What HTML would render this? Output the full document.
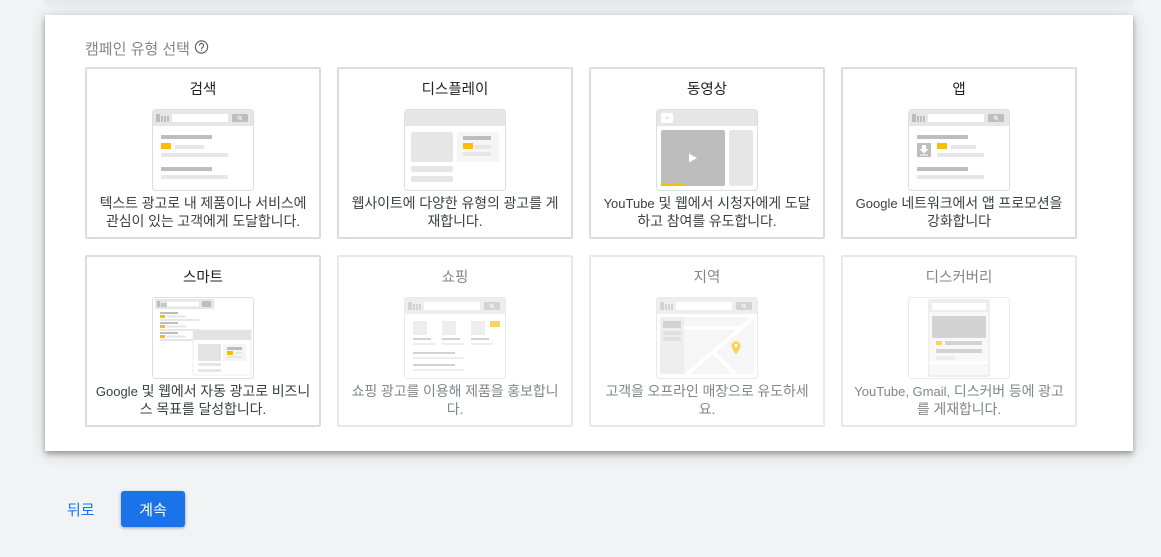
<!DOCTYPE html>
<html lang="ko">
<head>
<meta charset="utf-8">
<title>캠페인 유형 선택</title>
<style>
*{box-sizing:border-box}
html,body{margin:0;padding:0}
body{width:1161px;height:557px;overflow:hidden;position:relative;background:#f1f3f4;font-family:"Liberation Sans","Noto Sans CJK KR","NanumGothic",sans-serif;font-size:14px;color:#3c4043}
.top{position:absolute;left:45px;top:-27px;width:1088px;height:30px;background:#e8e9eb;box-shadow:0 1px 6px rgba(0,0,0,.06)}
.panel{position:absolute;left:45px;top:15px;width:1088px;height:436px;background:#fff;box-shadow:0 3px 5px rgba(0,0,0,.3),0 2px 16px rgba(0,0,0,.16)}
.label{position:absolute;left:85px;top:41px;font-size:15px;line-height:18px;color:#80868b;white-space:nowrap}
.help{position:absolute;left:194px;top:40px}
.card{position:absolute;width:236px;height:172px;background:#fff;border:2px solid #dadce0;border-radius:2px}
.card .t{position:absolute;left:0;right:0;top:12px;font-size:14.500px;line-height:18px;text-align:center;color:#202124;white-space:nowrap}
.card .d{position:absolute;left:0;right:0;top:125px;line-height:18px;letter-spacing:-.1px;text-align:center;color:#3c4043;white-space:nowrap}
.card .d i{font-style:normal;font-size:13px;letter-spacing:0;line-height:0}
.card svg{position:absolute;left:65px;top:40px}
.soft svg{filter:blur(.3px)}
.off{border-color:#e8e8ea}
.off .t,.off .d{color:#80868b}
.off svg{opacity:.65;filter:blur(.3px)}
.back{position:absolute;left:67px;top:502px;font-size:15px;line-height:18px;color:#1a73e8}
.go{position:absolute;left:121px;top:491px;width:64px;height:36px;border-radius:3px;background:#1a73e8;color:#fff;font-size:15px;text-align:center;line-height:39px;box-shadow:0 1px 3px rgba(60,64,67,.45)}
</style>
</head>
<body>
<div class="top"></div>
<div class="panel"></div>
<div class="label">캠페인 유형 선택</div>
<svg class="help" width="15" height="15" viewBox="0 0 15 15" fill="none"><circle cx="7.500" cy="7" r="6.100" stroke="#5f6368" stroke-width="1.200"/><path d="M5.400 5.500a2.100 2.100 0 1 1 3.300 1.700c-.7.500-1.200.9-1.200 1.800" stroke="#5f6368" stroke-width="1.200"/><rect x="6.900" y="9.800" width="1.200" height="1.200" fill="#5f6368"/></svg>

<div class="card" style="left:85px;top:67px">
<div class="t">검색</div>
<svg width="102" height="82" viewBox="0 0 102 82"><rect x=".5" y=".5" width="101" height="81" rx="3" fill="#fff" stroke="#dedede"/><path d="M1 3a2 2 0 0 1 2-2h96a2 2 0 0 1 2 2v14H1z" fill="#e6e6e6"/><path d="M4 5h4v8H4zM9 7h2v6H9zM12 7h2v6h-2zM15 7h2v6h-2z" fill="#bdbdbd"/><rect x="20" y="5" width="56" height="8" fill="#fff"/><rect x="80" y="5" width="16" height="8" rx="1" fill="#bdbdbd"/><circle cx="87.500" cy="8.500" r="1.500" fill="none" stroke="#fff" stroke-width=".8"/><path d="M88.500 9.500l2 2" stroke="#fff" stroke-width=".8"/><rect x="9" y="26" width="51" height="4" fill="#bdbdbd"/><rect x="9" y="34" width="10" height="6" fill="#fbbc04"/><rect x="23" y="36" width="29" height="4" fill="#e6e6e6"/><rect x="9" y="44" width="67" height="4" fill="#e6e6e6"/><rect x="9" y="58" width="51" height="4" fill="#bdbdbd"/><rect x="9" y="66" width="67" height="4" fill="#e6e6e6"/></svg>
<div class="d">텍스트 광고로 내 제품이나 서비스에<br>관심이 있는 고객에게 도달합니다.</div>
</div>

<div class="card" style="left:337px;top:67px">
<div class="t">디스플레이</div>
<svg width="102" height="82" viewBox="0 0 102 82"><rect x=".5" y=".5" width="101" height="81" rx="3" fill="#fff" stroke="#dedede"/><path d="M1 3a2 2 0 0 1 2-2h96a2 2 0 0 1 2 2v14H1z" fill="#e6e6e6"/><rect x="7" y="23" width="42" height="30" rx="2" fill="#e6e6e6"/><rect x="53" y="23" width="42" height="30" fill="#f5f5f5"/><rect x="59" y="27" width="28" height="4" fill="#bdbdbd"/><rect x="59" y="34" width="10" height="6" fill="#fbbc04"/><rect x="71" y="36" width="16" height="4" fill="#e6e6e6"/><rect x="59" y="43" width="28" height="4" fill="#e6e6e6"/><rect x="7" y="57" width="42" height="6" rx="2" fill="#e6e6e6"/><rect x="7" y="67" width="42" height="6" rx="2" fill="#e6e6e6"/></svg>
<div class="d">웹사이트에 다양한 유형의 광고를 게<br>재합니다.</div>
</div>

<div class="card" style="left:589px;top:67px">
<div class="t">동영상</div>
<svg width="102" height="82" viewBox="0 0 102 82"><rect x=".5" y=".5" width="101" height="81" rx="3" fill="#fff" stroke="#dedede"/><path d="M1 3a2 2 0 0 1 2-2h96a2 2 0 0 1 2 2v14H1z" fill="#e6e6e6"/><rect x="5" y="4" width="12" height="10" rx="2" fill="#fff"/><path d="M10 7.500l3 1.500-3 1.500z" fill="#dadada"/><rect x="5" y="21" width="64" height="56" rx="2" fill="#bdbdbd"/><path d="M33 44.500l8 4.500-8 4.500z" fill="#fff"/><rect x="5" y="75" width="24" height="2" fill="#fbbc04"/><rect x="73" y="21" width="24" height="56" rx="2" fill="#e6e6e6"/></svg>
<div class="d"><i>YouTube</i> 및 웹에서 시청자에게 도달<br>하고 참여를 유도합니다.</div>
</div>

<div class="card" style="left:841px;top:67px">
<div class="t">앱</div>
<svg width="102" height="82" viewBox="0 0 102 82"><rect x=".5" y=".5" width="101" height="81" rx="3" fill="#fff" stroke="#dedede"/><path d="M1 3a2 2 0 0 1 2-2h96a2 2 0 0 1 2 2v14H1z" fill="#e6e6e6"/><path d="M4 5h4v8H4zM9 7h2v6H9zM12 7h2v6h-2zM15 7h2v6h-2z" fill="#bdbdbd"/><rect x="20" y="5" width="56" height="8" fill="#fff"/><rect x="80" y="5" width="16" height="8" rx="1" fill="#bdbdbd"/><circle cx="87.500" cy="8.500" r="1.500" fill="none" stroke="#fff" stroke-width=".8"/><path d="M88.500 9.500l2 2" stroke="#fff" stroke-width=".8"/><rect x="9" y="26" width="51" height="4" fill="#bdbdbd"/><rect x="9" y="34" width="14" height="14" fill="#bdbdbd"/><path d="M14 36h4v4h2.500L16 44.500 11.500 40H14z" fill="#fff"/><rect x="12" y="45.500" width="8" height="1" fill="#fff"/><rect x="29" y="34" width="10" height="6" fill="#fbbc04"/><rect x="43" y="36" width="25" height="4" fill="#e6e6e6"/><rect x="29" y="44" width="47" height="4" fill="#e6e6e6"/><rect x="9" y="58" width="51" height="4" fill="#bdbdbd"/><rect x="9" y="66" width="67" height="4" fill="#e6e6e6"/></svg>
<div class="d"><i>Google</i> 네트워크에서 앱 프로모션을<br>강화합니다</div>
</div>

<div class="card soft" style="left:85px;top:255px">
<div class="t">스마트</div>
<svg width="102" height="82" viewBox="0 0 102 82"><rect x=".5" y=".5" width="101" height="81" rx="3" fill="#fff" stroke="#dedede"/><rect x="3" y="2" width="59" height="10" fill="#e6e6e6"/><path d="M5 4h3v6H5zM9 6h1.500v4H9zM11 6h1.500v4H11zM13 6h1.500v4H13z" fill="#bdbdbd"/><rect x="15" y="4.500" width="32" height="5" fill="#fff"/><rect x="50" y="4" width="9" height="6" rx="1" fill="#bdbdbd"/><rect x="8" y="15" width="18" height="2" fill="#bdbdbd"/><rect x="8" y="18" width="5" height="3" fill="#fbbc04"/><rect x="15" y="18.500" width="19" height="2" fill="#e6e6e6"/><rect x="8" y="22" width="39" height="2" fill="#e6e6e6"/><rect x="8" y="25" width="18" height="2" fill="#bdbdbd"/><rect x="8" y="28" width="5" height="3" fill="#fbbc04"/><rect x="15" y="28.500" width="19" height="2" fill="#e6e6e6"/><rect x="8" y="32" width="39" height="2" fill="#e6e6e6"/><rect x="8" y="35" width="18" height="2" fill="#bdbdbd"/><rect x="8" y="38" width="5" height="3" fill="#fbbc04"/><rect x="15" y="38.500" width="19" height="2" fill="#e6e6e6"/><rect x="8" y="42" width="34" height="2" fill="#e6e6e6"/><rect x="41" y="33" width="58" height="45" fill="#fff" stroke="#ececec" stroke-width=".8"/><rect x="41" y="33" width="58" height="10" fill="#e3e3e3"/><rect x="46" y="47" width="23" height="17" fill="#e3e3e3"/><rect x="71" y="47" width="23" height="17" fill="#f5f5f5"/><rect x="75" y="50" width="15" height="3" fill="#bdbdbd"/><rect x="75" y="54" width="6" height="4" fill="#fbbc04"/><rect x="83" y="55" width="7" height="2" fill="#e6e6e6"/><rect x="75" y="59" width="15" height="2" fill="#e6e6e6"/><rect x="46" y="66" width="23" height="3" fill="#e6e6e6"/><rect x="46" y="72" width="23" height="3" fill="#e6e6e6"/></svg>
<div class="d"><i>Google</i> 및 웹에서 자동 광고로 비즈니<br>스 목표를 달성합니다.</div>
</div>

<div class="card off" style="left:337px;top:255px">
<div class="t">쇼핑</div>
<svg width="102" height="82" viewBox="0 0 102 82"><rect x=".5" y=".5" width="101" height="81" rx="3" fill="#fff" stroke="#dedede"/><path d="M1 3a2 2 0 0 1 2-2h96a2 2 0 0 1 2 2v14H1z" fill="#e6e6e6"/><path d="M4 5h4v8H4zM9 7h2v6H9zM12 7h2v6h-2zM15 7h2v6h-2z" fill="#bdbdbd"/><rect x="20" y="5" width="56" height="8" fill="#fff"/><rect x="80" y="5" width="16" height="8" rx="1" fill="#bdbdbd"/><circle cx="87.500" cy="8.500" r="1.500" fill="none" stroke="#fff" stroke-width=".8"/><path d="M88.500 9.500l2 2" stroke="#fff" stroke-width=".8"/><rect x="9" y="24" width="14" height="14" fill="#e6e6e6"/><rect x="38" y="24" width="14" height="14" fill="#e6e6e6"/><rect x="67" y="24" width="14" height="14" fill="#e6e6e6"/><rect x="86" y="24" width="10" height="6" fill="#fbbc04"/><path d="M9 41h18v2H9zM38 41h18v2H38zM67 41h18v2H67zM9 55h42v2H9zM9 67h42v2H9z" fill="#bdbdbd"/><path d="M9 46h22v2H9zM38 46h22v2H38zM67 46h22v2H67zM9 60h51v2H9zM9 72h51v2H9z" fill="#e6e6e6"/></svg>
<div class="d">쇼핑 광고를 이용해 제품을 홍보합니<br>다.</div>
</div>

<div class="card off" style="left:589px;top:255px">
<div class="t">지역</div>
<svg width="102" height="82" viewBox="0 0 102 82"><rect x=".5" y=".5" width="101" height="81" rx="3" fill="#fff" stroke="#dedede"/><path d="M1 3a2 2 0 0 1 2-2h96a2 2 0 0 1 2 2v14H1z" fill="#e6e6e6"/><path d="M4 5h4v8H4zM9 7h2v6H9zM12 7h2v6h-2zM15 7h2v6h-2z" fill="#bdbdbd"/><rect x="20" y="5" width="56" height="8" fill="#fff"/><rect x="80" y="5" width="16" height="8" rx="1" fill="#bdbdbd"/><circle cx="87.500" cy="8.500" r="1.500" fill="none" stroke="#fff" stroke-width=".8"/><path d="M88.500 9.500l2 2" stroke="#fff" stroke-width=".8"/><rect x="4" y="20" width="94" height="57" fill="#f2f2f2"/><rect x="4" y="20" width="24" height="57" fill="#e6e6e6"/><rect x="7" y="24" width="18" height="7" fill="#bdbdbd"/><rect x="7" y="34" width="18" height="4" fill="#cfcfcf"/><rect x="7" y="40" width="18" height="4" fill="#cfcfcf"/><path d="M28 31h57" stroke="#fff" stroke-width="4"/><path d="M30 78L98 20" stroke="#fff" stroke-width="4"/><path d="M57 55L80 78" stroke="#fff" stroke-width="4"/><path d="M80 44a4.500 4.500 0 0 1 4.500 4.500C84.500 52 80 57.500 80 57.500S75.500 52 75.500 48.500A4.500 4.500 0 0 1 80 44z" fill="#fbbc04"/><circle cx="80" cy="48.500" r="1.500" fill="#fff"/></svg>
<div class="d">고객을 오프라인 매장으로 유도하세<br>요.</div>
</div>

<div class="card off" style="left:841px;top:255px">
<div class="t">디스커버리</div>
<svg width="102" height="82" viewBox="0 0 102 82"><rect x=".5" y=".5" width="101" height="81" rx="3" fill="#fff" stroke="#dedede"/><rect x="20" y="2" width="62" height="78" rx="2" fill="#e6e6e6"/><rect x="21.500" y="15" width="59" height="63" fill="#f5f5f5"/><rect x="24" y="6" width="54" height="7" fill="#fff"/><rect x="24" y="19" width="54" height="22" fill="#bdbdbd"/><rect x="28" y="44" width="6" height="4" fill="#fbbc04"/><rect x="37" y="44" width="37" height="4" fill="#bdbdbd"/><rect x="28" y="52" width="46" height="4" fill="#bdbdbd"/><rect x="28" y="59" width="19" height="4" fill="#e6e6e6"/><rect x="21.500" y="64" width="59" height="3" fill="#fff"/></svg>
<div class="d"><i>YouTube, Gmail,</i> 디스커버 등에 광고<br>를 게재합니다.</div>
</div>

<div class="back">뒤로</div>
<div class="go">계속</div>
</body>
</html>
